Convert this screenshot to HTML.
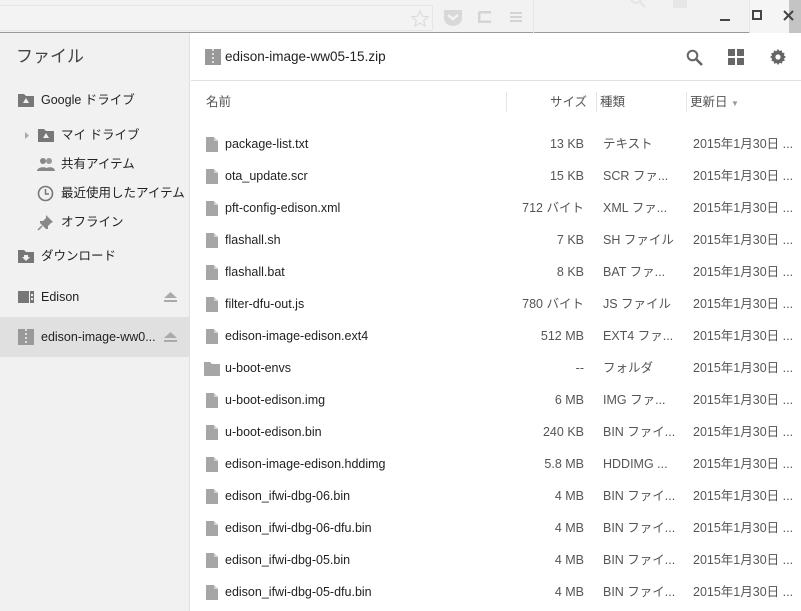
<!DOCTYPE html>
<html><head><meta charset="utf-8"><style>
*{margin:0;padding:0;box-sizing:border-box}
body{width:801px;height:611px;overflow:hidden;background:#fff;font-family:"Liberation Sans","Noto Sans CJK JP",sans-serif;font-size:13px;color:#333;position:relative}
.top{position:absolute;left:0;top:0;width:801px;height:33px;background:#f2f2f2;border-bottom:1px solid #9a9a9a}
.omni{position:absolute;left:-2px;top:5px;width:435px;height:26px;border:1px solid #e6e6e6;background:#f3f3f3;border-radius:2px}
.side{position:absolute;left:0;top:33px;width:190px;height:578px;background:#f1f1f1;border-right:1px solid #e0e0e0}
.side .t{position:absolute;left:16px;top:9px;font-size:17px;color:#444}
.si{position:absolute;left:0;width:190px;height:22px;font-size:12.5px;color:#222;line-height:22px}
.si svg{position:absolute;top:4px}
.sel{background:#e0e0e0}
.main{position:absolute;left:191px;top:33px;width:610px}
.hdr{position:absolute;left:0;top:0;width:610px;height:48px;border-bottom:1px solid #e0e0e0}
.col{position:absolute;top:58px;font-size:12.5px;color:#555}
.row{position:absolute;left:0;width:610px;height:32px;line-height:32px;font-size:12.5px}
.row .n{position:absolute;left:34px;color:#222}
.row .s{position:absolute;right:217px;color:#555}
.row .k{position:absolute;left:412px;color:#555}
.row .d{position:absolute;left:502px;color:#555}
.row svg{position:absolute;left:15px;top:9px}
</style></head><body>
<div class="top">
<div class="omni"></div>
<svg style="position:absolute;left:410px;top:9px" width="20" height="20" viewBox="0 0 20 20"><path d="M10 2l2.4 5.2 5.6.5-4.3 3.7 1.3 5.6L10 14.1 5 17l1.3-5.6L2 7.7l5.6-.5z" fill="none" stroke="#ddd" stroke-width="1.2"/></svg>
<svg style="position:absolute;left:443px;top:9px" width="20" height="18"><path d="M1 1h18v8a9 8 0 0 1-18 0z" fill="#d8d8d8"/><path d="M5 6l5 4 5-4" stroke="#f2f2f2" stroke-width="2.5" fill="none"/></svg>
<svg style="position:absolute;left:478px;top:11px" width="14" height="12"><path d="M1 1h12M1 1v10h12" stroke="#d4d4d4" stroke-width="3" fill="none"/></svg>
<div style="position:absolute;left:510px;top:12px;width:12px;height:2px;background:#d4d4d4;box-shadow:0 4px 0 #d4d4d4,0 8px 0 #d4d4d4"></div>
<div style="position:absolute;left:533px;top:0;width:1px;height:33px;background:#e6e6e6"></div>
<svg style="position:absolute;left:630px;top:-4px" width="16" height="12"><circle cx="6" cy="2" r="5" stroke="#e4e4e4" stroke-width="2" fill="none"/><path d="M10 6l5 5" stroke="#e4e4e4" stroke-width="2"/></svg>
<div style="position:absolute;left:673px;top:0;width:14px;height:8px;background:#e6e6e6"></div>
<div style="position:absolute;left:749px;top:0;width:40px;height:33px;background:#f5f5f5;border-left:1px solid #e6e6e6"></div>
<div style="position:absolute;left:789px;top:0;width:12px;height:33px;background:#c4c4c4"></div>
<div style="position:absolute;left:720px;top:19px;width:10px;height:2px;background:#444"></div>
<div style="position:absolute;left:752px;top:10px;width:10px;height:10px;border:2px solid #444"></div>
<svg style="position:absolute;left:783px;top:10px" width="11" height="11"><path d="M1 1l9 9M10 1l-9 9" stroke="#444" stroke-width="2"/></svg>
</div>
<div class="side">
<div class="t">ファイル</div>
<div class="si" style="top:56px"><svg style="left:18px" width="16" height="14"><path d="M0 1h6l2 2h8v11H0z" fill="#777"/><path d="M8 5l3 5H5z" fill="#f1f1f1"/></svg><span style="position:absolute;left:41px">Google ドライブ</span></div>
<div class="si" style="top:91px"><svg style="left:25px;top:8px" width="5" height="7"><path d="M0 0l4 3.5L0 7z" fill="#aaa"/></svg><svg style="left:38px" width="16" height="14"><path d="M0 1h6l2 2h8v11H0z" fill="#777"/><path d="M8 5l3 5H5z" fill="#f1f1f1"/></svg><span style="position:absolute;left:61px">マイ ドライブ</span></div>
<div class="si" style="top:120px"><svg style="left:37px" width="18" height="14"><circle cx="6" cy="4" r="3" fill="#888"/><circle cx="12" cy="4" r="3" fill="#999"/><path d="M0 14c0-5 12-5 12 0zM8 14c0-5 10-5 10 0z" fill="#888"/></svg><span style="position:absolute;left:61px">共有アイテム</span></div>
<div class="si" style="top:149px"><svg style="left:37px;top:3px" width="17" height="17"><circle cx="8.5" cy="8.5" r="7" stroke="#777" stroke-width="1.6" fill="none"/><path d="M8.5 4v5h3.5" stroke="#777" stroke-width="1.5" fill="none"/></svg><span style="position:absolute;left:61px">最近使用したアイテム</span></div>
<div class="si" style="top:178px"><svg style="left:37px;top:3px" width="17" height="17"><path d="M9 1l7 7-2 1-3 3 0 3-2 0-6-6 0-2 3 0 3-3z" fill="#888"/><path d="M5 12l-4 4" stroke="#888" stroke-width="1.5"/></svg><span style="position:absolute;left:61px">オフライン</span></div>
<div class="si" style="top:212px"><svg style="left:18px" width="16" height="14"><path d="M0 1h6l2 2h8v11H0z" fill="#777"/><path d="M6 6h4v2h2l-4 4-4-4h2z" fill="#f1f1f1"/></svg><span style="position:absolute;left:41px">ダウンロード</span></div>
<div class="si" style="top:253px"><svg style="left:18px;top:5px" width="16" height="12"><rect width="11" height="12" fill="#777"/><rect x="12" width="4" height="12" fill="#777"/><rect x="13" y="3" width="2" height="2" fill="#f1f1f1"/><rect x="13" y="7" width="2" height="2" fill="#f1f1f1"/></svg><span style="position:absolute;left:41px">Edison</span><svg style="left:164px;top:6px" width="13" height="11"><path d="M6.5 0L13 6H0z" fill="#aaa"/><rect y="8" width="13" height="2" fill="#aaa"/></svg></div>
<div class="si sel" style="top:284px;height:40px;line-height:40px"><svg style="left:18px;top:12px" width="16" height="16"><rect width="16" height="16" fill="#999"/><path d="M8 0v14" stroke="#ddd" stroke-width="2" stroke-dasharray="2 2"/></svg><span style="position:absolute;left:41px">edison-image-ww0...</span><svg style="left:164px;top:15px" width="13" height="11"><path d="M6.5 0L13 6H0z" fill="#aaa"/><rect y="8" width="13" height="2" fill="#aaa"/></svg></div>
</div>
<div class="main">
<div class="hdr">
<svg style="position:absolute;left:14px;top:16px" width="16" height="16"><rect width="16" height="16" fill="#999"/><path d="M8 0v14" stroke="#ddd" stroke-width="2" stroke-dasharray="2 2"/></svg>
<div style="position:absolute;left:34px;top:16px;font-size:13.5px;color:#222">edison-image-ww05-15.zip</div>
<svg style="position:absolute;left:495px;top:16px" width="17" height="17"><circle cx="6.5" cy="6.5" r="4.8" stroke="#666" stroke-width="2" fill="none"/><path d="M10 10l6 6" stroke="#666" stroke-width="2.6"/></svg>
<svg style="position:absolute;left:537px;top:16px" width="16" height="16" fill="#666"><rect width="7" height="7"/><rect x="9" width="7" height="7"/><rect y="9" width="7" height="7"/><rect x="9" y="9" width="7" height="7"/></svg>
<svg style="position:absolute;left:579px;top:16px" width="16" height="16" viewBox="0 0 16 16"><path d="M8 0l1.5 2 2.3-.8.4 2.4 2.4.4-.8 2.3L16 8l-2 1.5.8 2.3-2.4.4-.4 2.4-2.3-.8L8 16l-1.5-2-2.3.8-.4-2.4-2.4-.4.8-2.3L0 8l2-1.5-.8-2.3 2.4-.4.4-2.4 2.3.8z" fill="#666"/><circle cx="8" cy="8" r="2.6" fill="#fff"/></svg>
</div>
<div class="col" style="left:15px">名前</div>
<div style="position:absolute;left:315px;top:59px;width:1px;height:20px;background:#e4e4e4"></div>
<div class="col" style="left:359px">サイズ</div>
<div style="position:absolute;left:405px;top:59px;width:1px;height:20px;background:#e4e4e4"></div>
<div class="col" style="left:409px">種類</div>
<div style="position:absolute;left:495px;top:59px;width:1px;height:20px;background:#e4e4e4"></div>
<div class="col" style="left:499px">更新日 <span style="font-size:8px;color:#999">▼</span></div>
</div>
<div class="main" id="rows"></div>
<script>
var d=[["package-list.txt","13 KB","テキスト"],["ota_update.scr","15 KB","SCR ファ..."],["pft-config-edison.xml","712 バイト","XML ファ..."],["flashall.sh","7 KB","SH ファイル"],["flashall.bat","8 KB","BAT ファ..."],["filter-dfu-out.js","780 バイト","JS ファイル"],["edison-image-edison.ext4","512 MB","EXT4 ファ..."],["u-boot-envs","--","フォルダ",1],["u-boot-edison.img","6 MB","IMG ファ..."],["u-boot-edison.bin","240 KB","BIN ファイ..."],["edison-image-edison.hddimg","5.8 MB","HDDIMG ..."],["edison_ifwi-dbg-06.bin","4 MB","BIN ファイ..."],["edison_ifwi-dbg-06-dfu.bin","4 MB","BIN ファイ..."],["edison_ifwi-dbg-05.bin","4 MB","BIN ファイ..."],["edison_ifwi-dbg-05-dfu.bin","4 MB","BIN ファイ..."]];
var h="";d.forEach(function(r,i){var ic=r[3]?'<svg width="16" height="14" style="left:13px;top:10px"><path d="M0 0h6l2 2h8v12H0z" fill="#a6a6a6"/></svg>':'<svg width="12" height="15"><path d="M0 0h8l4 4v11H0z" fill="#a6a6a6"/><path d="M8 0v4h4" fill="#d0d0d0"/></svg>';
h+='<div class="row" style="top:'+(95+i*32)+'px">'+ic+'<span class="n">'+r[0]+'</span><span class="s">'+r[1]+'</span><span class="k">'+r[2]+'</span><span class="d">2015年1月30日 ...</span></div>';});
document.getElementById("rows").innerHTML=h;
</script>
</body></html>
